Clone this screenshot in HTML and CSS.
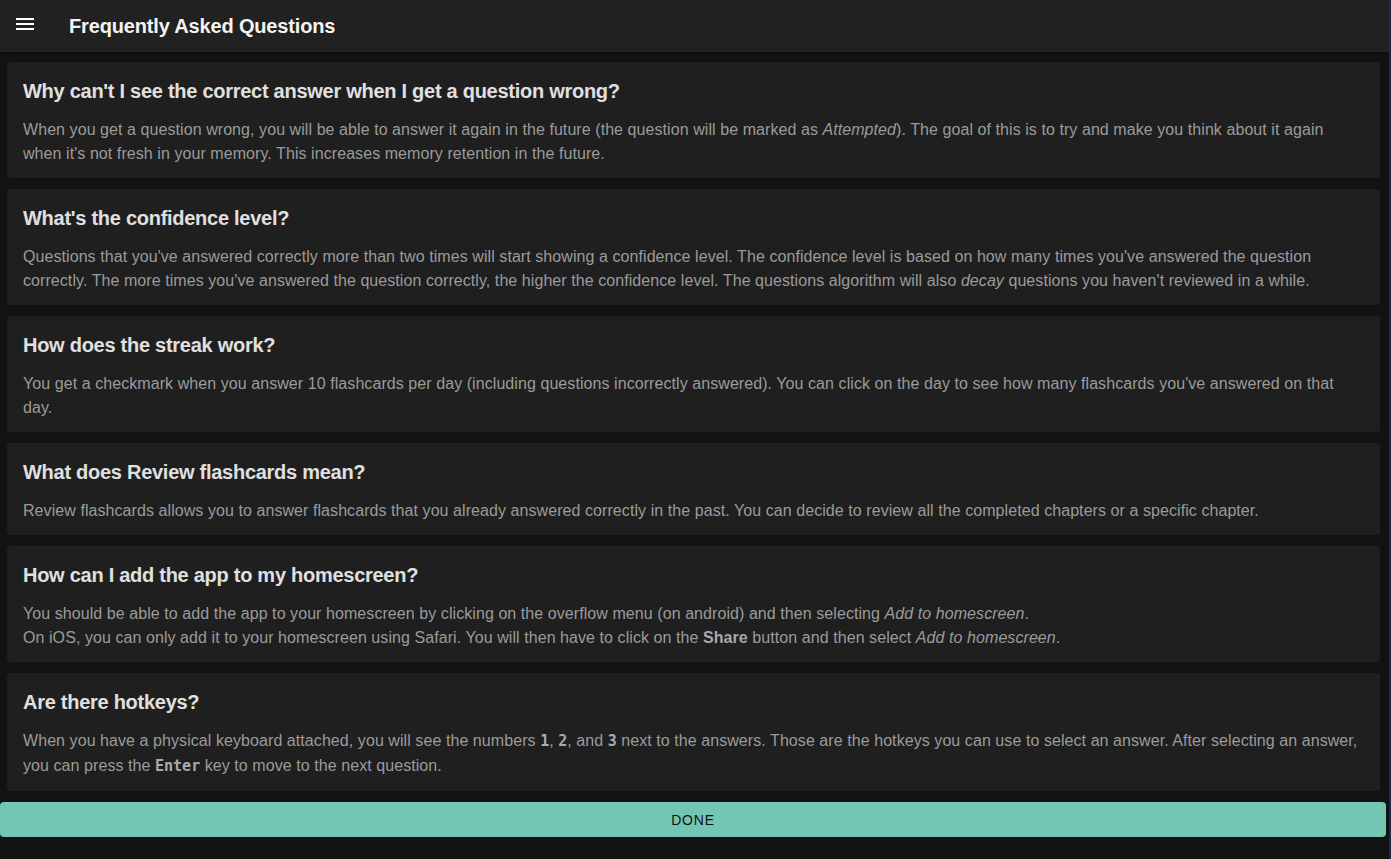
FILE: index.html
```html
<!DOCTYPE html>
<html lang="en">
<head>
<meta charset="utf-8">
<title>Frequently Asked Questions</title>
<link rel="stylesheet" href="styles.css">
</head>
<body>
<div class="page">
  <header class="appbar">
    <button class="menu-btn" aria-label="Menu">
      <svg width="18" height="12" viewBox="0 0 18 12"><rect x="0" y="0" width="18" height="2" fill="#fff"/><rect x="0" y="5" width="18" height="2" fill="#fff"/><rect x="0" y="10" width="18" height="2" fill="#fff"/></svg>
    </button>
    <h1 class="appbar-title">Frequently Asked Questions</h1>
  </header>
  <main class="content">
    <section class="card">
      <h2 class="q">Why can't I see the correct answer when I get a question wrong?</h2>
      <p class="a">When you get a question wrong, you will be able to answer it again in the future (the question will be marked as <em>Attempted</em>). The goal of this is to try and make you think about it again when it's not fresh in your memory. This increases memory retention in the future.</p>
    </section>
    <section class="card">
      <h2 class="q">What's the confidence level?</h2>
      <p class="a">Questions that you've answered correctly more than two times will start showing a confidence level. The confidence level is based on how many times you've answered the question correctly. The more times you've answered the question correctly, the higher the confidence level. The questions algorithm will also <em>decay</em> questions you haven't reviewed in a while.</p>
    </section>
    <section class="card">
      <h2 class="q">How does the streak work?</h2>
      <p class="a">You get a checkmark when you answer 10 flashcards per day (including questions incorrectly answered). You can click on the day to see how many flashcards you've answered on that day.</p>
    </section>
    <section class="card">
      <h2 class="q">What does Review flashcards mean?</h2>
      <p class="a">Review flashcards allows you to answer flashcards that you already answered correctly in the past. You can decide to review all the completed chapters or a specific chapter.</p>
    </section>
    <section class="card">
      <h2 class="q">How can I add the app to my homescreen?</h2>
      <p class="a">You should be able to add the app to your homescreen by clicking on the overflow menu (on android) and then selecting <em>Add to homescreen</em>.<br>On iOS, you can only add it to your homescreen using Safari. You will then have to click on the <strong>Share</strong> button and then select <em>Add to homescreen</em>.</p>
    </section>
    <section class="card">
      <h2 class="q">Are there hotkeys?</h2>
      <p class="a">When you have a physical keyboard attached, you will see the numbers <kbd>1</kbd>, <kbd>2</kbd>, and <kbd>3</kbd> next to the answers. Those are the hotkeys you can use to select an answer. After selecting an answer, you can press the <kbd>Enter</kbd> key to move to the next question.</p>
    </section>
  </main>
  <div class="actions">
    <button class="done-btn">DONE</button>
  </div>
</div>
</body>
</html>
```
FILE: styles.css
```css
html, body {
  margin: 0;
  padding: 0;
  background: #121212;
  height: 100%;
}
body {
  font-family: "Liberation Sans", Arial, sans-serif;
  overflow: hidden;
  border-right: 2px solid #23244a;
  box-sizing: border-box;
}
.page {
  display: flex;
  flex-direction: column;
}
.appbar {
  height: 52px;
  background: #212121;
  display: flex;
  align-items: center;
  padding-left: 16px;
  box-shadow: 0 1px 3px rgba(0,0,0,0.3);
}
.menu-btn {
  background: none;
  border: 0;
  padding: 0;
  width: 18px;
  height: 12px;
  display: flex;
  align-self: flex-start;
  margin-top: 18px;
  cursor: pointer;
}
.appbar-title {
  margin: 0 0 0 35px;
  font-size: 20px;
  font-weight: 700;
  color: #f4f4f4;
  letter-spacing: -0.16px;
}
.content {
  display: flex;
  flex-direction: column;
  gap: 11px;
  padding: 10px 9px 0 7px;
}
.card {
  background: #1f1f1f;
  border-radius: 4px;
  padding: 16px 16px 12px;
}
.q {
  margin: 0 0 14px;
  font-size: 20px;
  line-height: 26px;
  font-weight: 700;
  letter-spacing: -0.27px;
  color: #e0e0e0;
}
.a {
  margin: 0;
  font-size: 16px;
  line-height: 24px;
  letter-spacing: 0.07px;
  color: #9b9b9b;
}
.a strong {
  color: #a8a8a8;
}
.a kbd {
  font-family: "DejaVu Sans Mono", "Liberation Mono", monospace;
  font-weight: 700;
  font-size: 15px;
  line-height: 25px;
  letter-spacing: 0;
  color: #ababab;
}
.actions {
  padding: 11px 3px 0 0;
}
.done-btn {
  display: block;
  width: 100%;
  height: 35px;
  background: #72c6b3;
  border: 0;
  border-radius: 4px;
  font-family: "Liberation Sans", Arial, sans-serif;
  font-size: 14px;
  font-weight: 500;
  letter-spacing: 0.8px;
  color: #121212;
  cursor: pointer;
}
```
